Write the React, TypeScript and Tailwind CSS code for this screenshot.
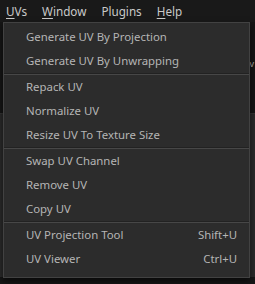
import React from "react";

type Item = { label: string; shortcut?: string } | "sep";

const items: Item[] = [
  { label: "Generate UV By Projection" },
  { label: "Generate UV By Unwrapping" },
  "sep",
  { label: "Repack UV" },
  { label: "Normalize UV" },
  { label: "Resize UV To Texture Size" },
  "sep",
  { label: "Swap UV Channel" },
  { label: "Remove UV" },
  { label: "Copy UV" },
  "sep",
  { label: "UV Projection Tool", shortcut: "Shift+U" },
  { label: "UV Viewer", shortcut: "Ctrl+U" },
];

const App = () => {
  return (
    <div
      className="relative w-[255px] h-[284px] overflow-hidden bg-[#151515] text-[#c9c9c9]"
      style={{ fontFamily: '"Noto Sans", "Open Sans", sans-serif' }}
    >
      {/* menu bar */}
      <div className="flex h-[22px] items-center gap-[15px] bg-[#191919] pl-[6px] pt-[1px] text-[11.7px]">
        <span>
          <span className="underline underline-offset-2">U</span>Vs
        </span>
        <span>
          <span className="underline underline-offset-2">W</span>indow
        </span>
        <span>Plugins</span>
        <span>
          <span className="underline underline-offset-2">H</span>elp
        </span>
      </div>

      {/* backdrop */}
      <div className="flex h-[91px] justify-end">
        <span className="mt-[35px] mr-[1px] text-[9px] text-[#aaa]">v</span>
      </div>
      <div className="h-[164px] bg-[#2a2a2a] border-t border-[#333]" />
      <div className="h-[7px] bg-[#161616]" />

      {/* dropdown */}
      <div className="absolute left-[3px] top-[22px] w-[247px] border border-[#424242] bg-[#2c2c2c] pt-[2px] pb-[6px] text-[11.4px] text-[#b5b5b5] shadow-[0_3px_6px_rgba(0,0,0,0.6)]">
        {items.map((it, i) =>
          it === "sep" ? (
            <div key={i} className="h-[2px] border-t border-[#222] bg-[#474747]" />
          ) : (
            <div key={i} className="flex h-[24px] items-center justify-between pl-[22px] pr-[12px]">
              <span>{it.label}</span>
              {it.shortcut && <span>{it.shortcut}</span>}
            </div>
          )
        )}
      </div>
    </div>
  );
};

export default App;
